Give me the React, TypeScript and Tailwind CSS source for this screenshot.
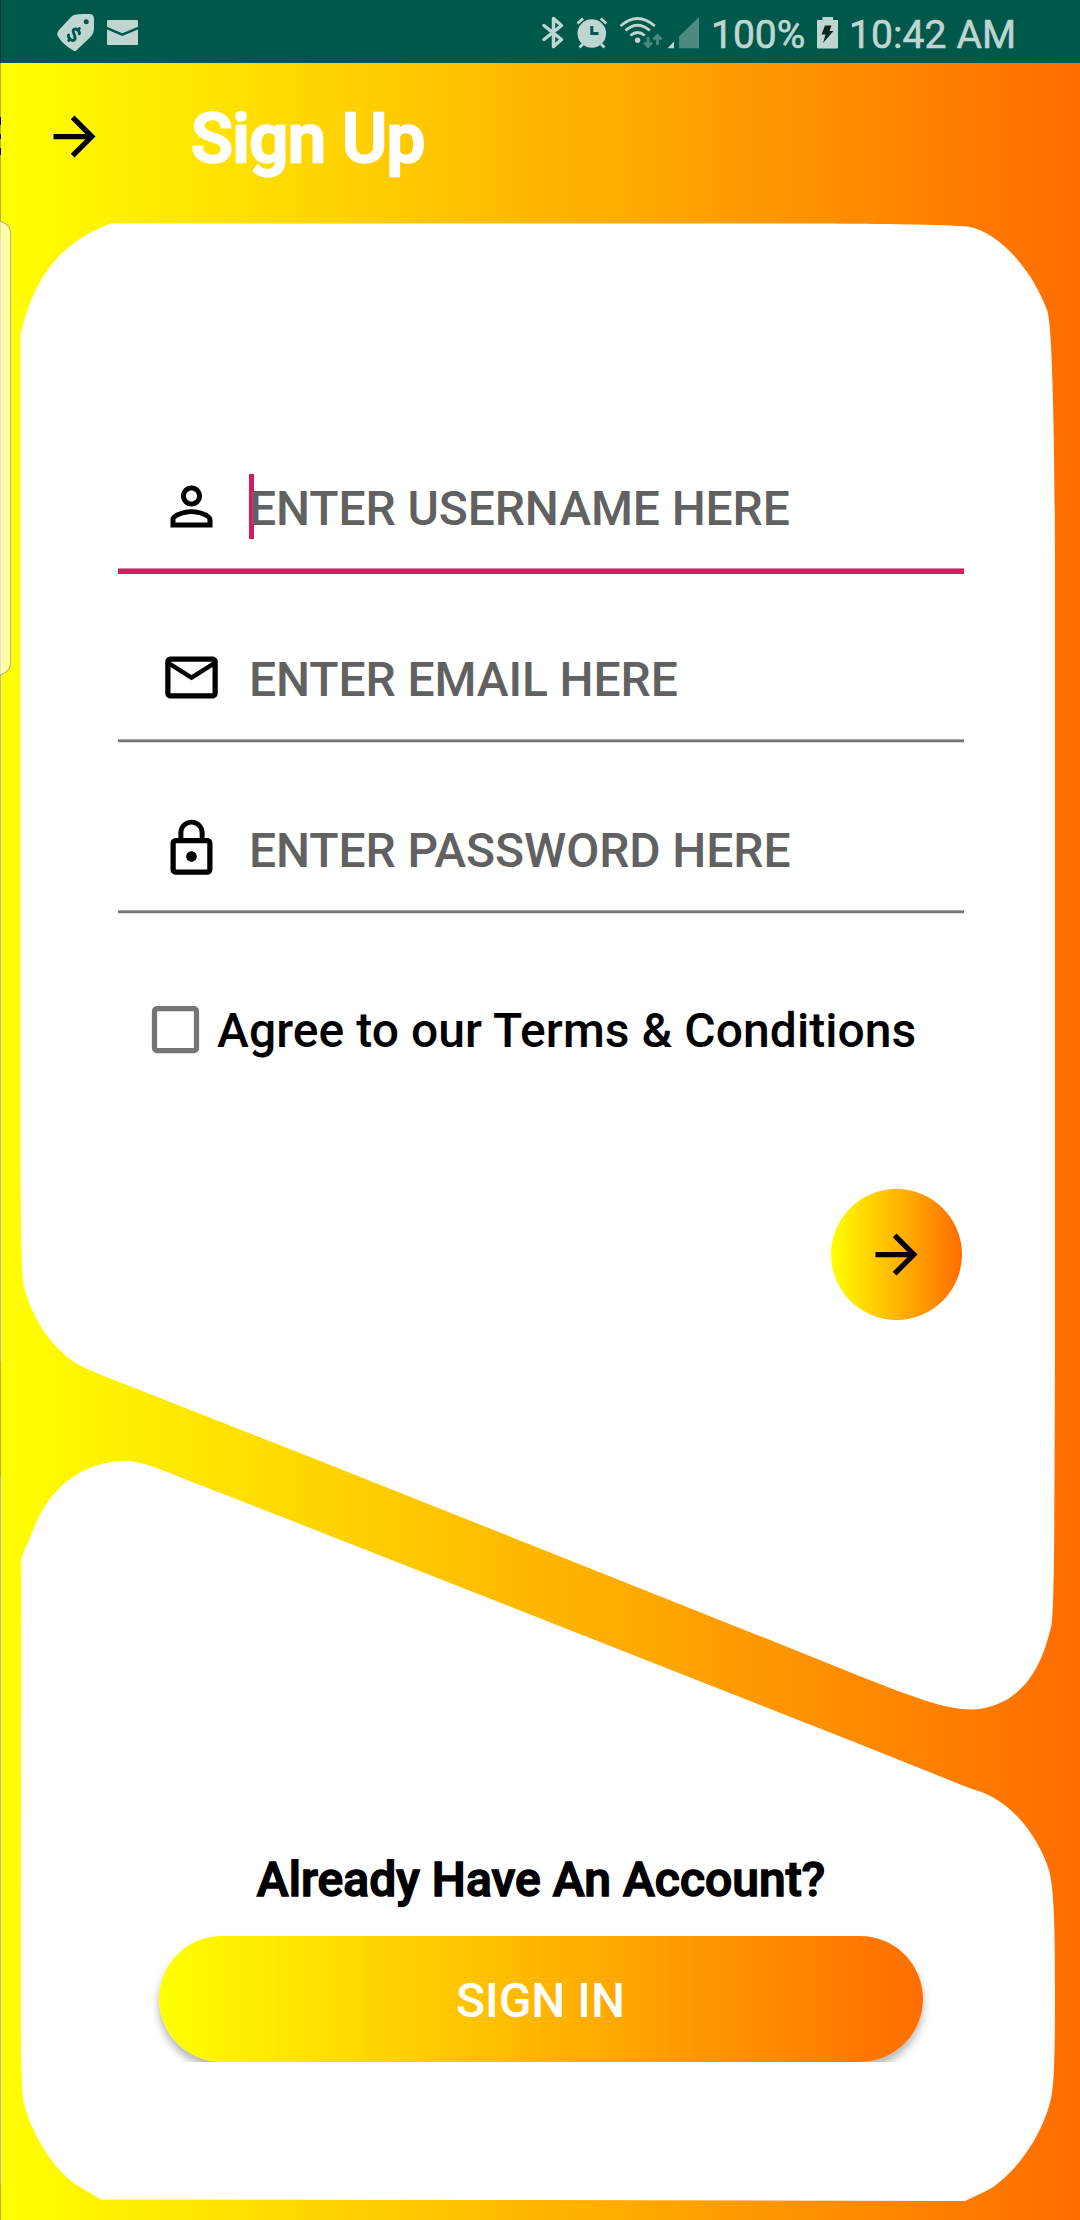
import React from "react";

const ARROW = "M12 4l-1.41 1.41L16.17 11H4v2h12.17l-5.58 5.59L12 20l8-8z";
const PERSON =
  "M12 5.9c1.16 0 2.1.94 2.1 2.1s-.94 2.1-2.1 2.1S9.9 9.16 9.9 8s.94-2.1 2.1-2.1m0 9c2.97 0 6.1 1.46 6.1 2.1v1.1H5.9V17c0-.64 3.13-2.1 6.1-2.1M12 4C9.79 4 8 5.79 8 8s1.79 4 4 4 4-1.79 4-4-1.79-4-4-4zm0 9c-2.67 0-8 1.34-8 4v3h16v-3c0-2.66-5.33-4-8-4z";
const MAIL =
  "M22 6c0-1.1-.9-2-2-2H4c-1.1 0-2 .9-2 2v12c0 1.1.9 2 2 2h16c1.1 0 2-.9 2-2V6zm-2 0l-8 5-8-5h16zm0 12H4V8l8 5 8-5v10z";
const LOCK =
  "M12 17c1.1 0 2-.9 2-2s-.9-2-2-2-2 .9-2 2 .9 2 2 2zm6-9h-1V6c0-2.76-2.24-5-5-5S7 3.24 7 6v2H6c-1.1 0-2 .9-2 2v10c0 1.1.9 2 2 2h12c1.1 0 2-.9 2-2V10c0-1.1-.9-2-2-2zM8.9 6c0-1.71 1.39-3.1 3.1-3.1s3.1 1.39 3.1 3.1v2H8.9V6zM18 20H6V10h12v10z";
const CHECKBOX =
  "M19 5v14H5V5h14m0-2H5c-1.1 0-2 .9-2 2v14c0 1.1.9 2 2 2h14c1.1 0 2-.9 2-2V5c0-1.1-.9-2-2-2z";

function Icon({ d, className = "" }: { d: string; className?: string }) {
  return (
    <svg viewBox="0 0 24 24" className={`h-[63px] w-[63px] shrink-0 fill-current ${className}`}>
      <path d={d} />
    </svg>
  );
}

/* The two white panels split by a diagonal band */
function Panels() {
  return (
    <svg viewBox="0 0 1080 2220" className="absolute inset-0 h-[2220px] w-[1080px]">
      <path
        fill="#fff"
        d="M110 223.4H820C880 223.7 945 224.5 968 226.5C1002 233 1034 274 1047 310C1053 324 1054.8 460 1055 560V1351C1054.6 1500 1054.5 1602 1051.7 1624C1043 1663 1025 1706 972 1709.5C945 1709.5 915 1698 847 1671L780 1644L300 1453L100 1374.5L83 1367C62 1357 36 1330 25 1290C21.5 1283 21 1250 20.5 1140V334C36 272 62 243 110 223.4Z"
      />
      <path
        fill="#fff"
        d="M21.3 1558L36 1523C54 1483 85 1462 125 1460.7C145 1462 160 1469 200 1485L300 1524L860 1744.3L968 1787.5L984 1793C1020 1808 1042 1846 1049.5 1872C1054 1892 1055 1925 1055 1990C1055 2045 1054.5 2080 1051.5 2096C1043 2139 1009 2181 984 2192L965 2201L540 2200L101 2199.5L75 2184C48 2164 30 2127 25 2106.5C21.5 2098 21 2060 20.8 2010Z"
      />
    </svg>
  );
}

/* Neighbouring screen peeking in with its shadow, and the edge panel handle */
function LeftEdge() {
  return (
    <>
      <div className="absolute left-0 top-0 flex w-px flex-col">
        <div className="h-[63px] bg-[#013d34]" />
        <div className="h-[54px] bg-[#b3b300]" />
        <div className="h-[8px] bg-black" />
        <div className="h-[9px] bg-[#b3b300]" />
        <div className="h-[5px] bg-black" />
        <div className="h-[9px] bg-[#b3b300]" />
        <div className="h-[7px] bg-black" />
        <div className="h-[85px] bg-[#b3b300]" />
        <div className="h-[1123px] bg-[#b3b3b3]" />
        <div className="h-[112px] bg-[#b3b300]" />
        <div className="h-[709px] bg-[#b3b3b3]" />
        <div className="h-[36px] bg-[#b3b300]" />
      </div>
      <div className="absolute -left-[20px] top-[221px] h-[454px] w-[31px] rounded-[12px] border border-[#808080]/60 bg-white/65" />
    </>
  );
}

function StatusBar() {
  return (
    <div className="flex h-[63px] items-start bg-[#00584b] text-[#bfd5d2]">
      <svg viewBox="56 13 39 39" className="ml-[56px] mt-[13px] h-[39px] w-[39px]">
        <path
          fill="currentColor"
          d="M75 14.8Q78 14 83 14H90Q94 14.3 94 19V28Q94 33 91 36.500L76.500 50.200Q74.500 52 72.500 50Q62 44 57.500 35.500Q56.500 32.500 59.500 29.500L71 17Q73 15.200 75 14.800Z"
        />
        <circle cx="86.200" cy="21.700" r="2.500" fill="#00584b" />
        {/* Dollar sign, tilted with the tag */}
        <g fill="none" stroke="#00584b" strokeWidth="2.900" strokeLinecap="round" transform="rotate(42 74 34.500)">
          <path d="M77.500 30.500C76.500 28 71 28 70.500 31C70.200 34.500 78 34 77.800 38C77.500 41.300 71.500 41.300 70.300 38.500" />
          <path d="M74 26.500V28.500M74 40.500V42.500" />
        </g>
      </svg>
      <svg viewBox="107 20 31 25" className="ml-[12px] mt-[20px] h-[25px] w-[31px]">
        <path fill="currentColor" d="M107 21Q107 20 108 20H137Q138 20 138 21V26.800L122.300 33.200L107 26.800ZM107 29.500L122.300 36L138 29.500V44Q138 45 137 45H108Q107 45 107 44Z" />
      </svg>
      <svg viewBox="541 14 24 37" className="ml-[403px] mt-[14px] h-[37px] w-[24px]">
        <path d="M544 25.500L561.500 39.500L553.500 46.500V18.500L561.500 25.500L544 39.500" fill="none" stroke="currentColor" strokeWidth="3.500" strokeLinejoin="round" strokeLinecap="round" />
      </svg>
      <svg viewBox="575 15 34 35" className="ml-[10px] mt-[15px] h-[35px] w-[34px]">
        <circle cx="591.800" cy="33.500" r="14.300" fill="currentColor" />
        <path d="M577.500 23.500L583 18.500M606.300 23.500L600.800 18.500M579.500 47.500L583 44M604.500 47.500L601 44" stroke="currentColor" strokeWidth="2.800" />
        <path d="M591.800 26V33.500H598.500" stroke="#00584b" strokeWidth="3" fill="none" />
      </svg>
      <svg viewBox="618 14 46 37" className="ml-[9px] mt-[14px] h-[37px] w-[46px]">
        <g fill="none" stroke="currentColor" strokeWidth="2.700">
          <path d="M620.500 26Q637.500 11 654.800 26" />
          <path d="M625.500 30.500Q637.500 20 649.800 30.500" />
          <path d="M630.500 35.500Q637.500 29.500 644.800 35.500" />
        </g>
        <circle cx="637.600" cy="40.300" r="2.700" fill="currentColor" />
        <path d="M648 37V46.500M644.200 42.500L648 46.500L651.800 42.500M657.500 45V35.500M653.500 39.500L657.500 35.500L661.500 39.500" fill="none" stroke="#4d8a81" strokeWidth="2.800" />
      </svg>
      <svg viewBox="667 16 33 33" className="ml-[3px] mt-[16px] h-[33px] w-[33px]">
        <path d="M667.500 48.200L674 41.500V48.200Z" fill="currentColor" />
        <path d="M679 48.200V36.500L699 17V48.200Z" fill="#4d8a81" />
      </svg>
      <span className="ml-[11px] mt-[12px] w-[106px] whitespace-nowrap text-[39px] leading-[46px] [-webkit-text-stroke:0.600px_#bfd5d2]">100%</span>
      <svg viewBox="817 16 21 33" className="mt-[16px] h-[33px] w-[21px]">
        <path d="M822.500 17H833V20H838V47.500Q838 48.500 837 48.500H818Q817 48.500 817 47.500V20H822.500Z" fill="currentColor" />
        <path d="M825 25.500H831.500L829.500 31H833.500L823 43L825.500 34.500H821.500Z" fill="#10231f" />
      </svg>
      <span className="ml-[11px] mt-[12px] whitespace-nowrap text-[39px] leading-[46px] tracking-[0.1px] [-webkit-text-stroke:0.600px_#bfd5d2]">10:42 AM</span>
    </div>
  );
}

function Field({ icon, label, focused = false }: { icon: string; label: string; focused?: boolean }) {
  return (
    <div className="h-[171px]">
      <div className="flex h-[121px] items-center pl-[42px]">
        <Icon d={icon} className="-mt-[2px]" />
        <div className="relative ml-[26px] mt-[2px] whitespace-nowrap text-[48px] font-medium leading-[56px] tracking-[-0.1px] text-[#616161]">
          {focused && <div className="absolute left-0 -top-[7px] h-[65px] w-[5px] bg-[#d81b60]" />}
          <span className="relative">{label}</span>
        </div>
      </div>
      {focused ? (
        <div className="h-[6px] border-t border-[#e881a7] bg-[#d81b60]" />
      ) : (
        <div className="h-[4px] border-b border-t border-b-[#dedede] border-t-[#aaaaaa] bg-[#757575]" />
      )}
    </div>
  );
}

export default function App() {
  return (
    <div className="relative h-[2220px] w-[1080px] overflow-hidden bg-[linear-gradient(90deg,#ffff00_1%,#ff6d00_99.500%)] font-['Roboto',sans-serif] text-black">
      <Panels />
      <div className="relative flex flex-col">
        <StatusBar />
        <header className="flex h-[147px] items-center pl-[43px]">
          <Icon d={ARROW} />
          <h1 className="ml-[85px] mt-[4px] whitespace-nowrap text-[69px] font-medium leading-[84px] tracking-[-0.6px] text-white [-webkit-text-stroke:2.500px_white]">Sign Up</h1>
        </header>
        <main className="ml-[118px] mt-[237px] flex w-[846px] flex-col">
          <Field icon={PERSON} label="ENTER USERNAME HERE" focused />
          <Field icon={MAIL} label="ENTER EMAIL HERE" />
          <Field icon={LOCK} label="ENTER PASSWORD HERE" />
          <label className="mt-[39px] flex h-[60px] items-center pl-[26px]">
            <Icon d={CHECKBOX} className="text-[#757575]" />
            <span className="ml-[10px] mt-[4px] whitespace-nowrap text-[48px] font-medium leading-[56px] tracking-[0.06px]">Agree to our Terms &amp; Conditions</span>
          </label>
          <button className="mr-[2px] mt-[130px] flex h-[131px] w-[131px] items-center justify-center self-end rounded-full bg-[linear-gradient(90deg,#ffff00,#ff6d00)]">
            <Icon d={ARROW} />
          </button>
        </main>
        <footer className="mt-[532px] flex flex-col items-center">
          <p className="ml-[2px] h-[56px] whitespace-nowrap text-[48px] font-medium leading-[56px] tracking-[0.04px] [-webkit-text-stroke:1.500px_black]">Already Have An Account?</p>
          <div className="mt-[18px] flex w-full justify-center overflow-hidden pl-px pt-[10px]">
            <button className="h-[126px] w-[764px] rounded-full bg-[linear-gradient(90deg,#ffff00,#ff6d00)] pt-[3px] text-[48px] font-medium text-white shadow-[0_6px_8px_rgba(0,0,0,0.3)]">
              SIGN IN
            </button>
          </div>
        </footer>
      </div>
      <LeftEdge />
    </div>
  );
}
